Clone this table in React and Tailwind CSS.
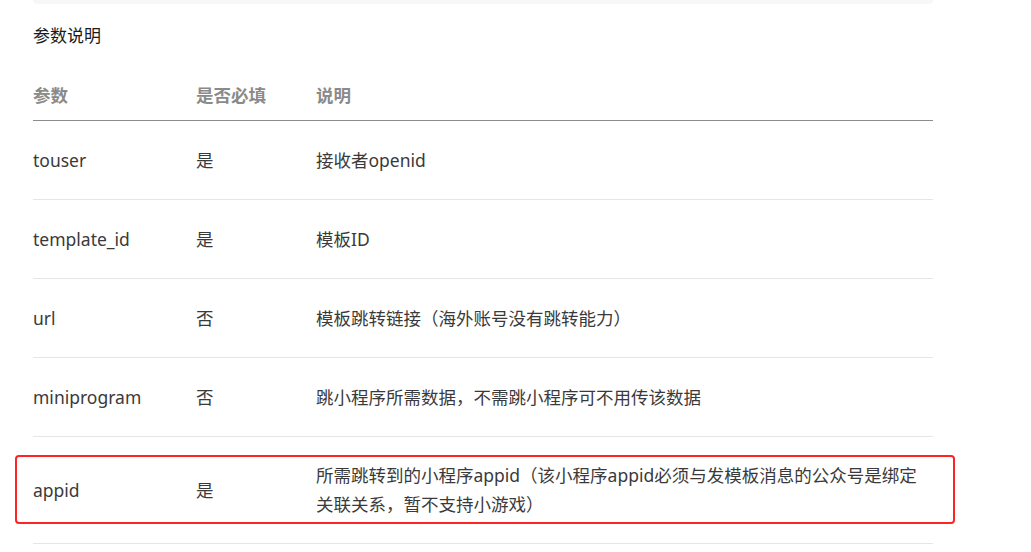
import React from "react";

const rows = [
  { p: "touser", r: "是", d: "接收者openid" },
  { p: "template_id", r: "是", d: "模板ID" },
  { p: "url", r: "否", d: "模板跳转链接（海外账号没有跳转能力）" },
  { p: "miniprogram", r: "否", d: "跳小程序所需数据，不需跳小程序可不用传该数据" },
];

export default function App() {
  return (
    <div className="relative w-[1031px] h-[552px] overflow-hidden bg-white font-['Noto_Sans','Noto_Sans_CJK_SC',sans-serif] text-[17.5px] text-[#3a3a3a]">
      <div className="ml-[33px] w-[900px]">
        <div className="h-[4px] rounded-b-[6px] bg-[#f7f7f7]" />
        <div className="mt-[18px] h-[28px] leading-[28px] text-[17px] text-[#1a1a1a]">参数说明</div>
        <div className="mt-[31px] grid grid-cols-[163px_120px_1fr] border-b border-[#8c8c8c] pb-[11px] font-bold leading-[28px] text-[#8a8a8a]">
          <div>参数</div>
          <div>是否必填</div>
          <div>说明</div>
        </div>
        {rows.map((row) => (
          <div
            key={row.p}
            className="grid h-[79px] grid-cols-[163px_120px_1fr] items-center border-b border-[#e6e6e6] leading-[28px]"
          >
            <div>{row.p}</div>
            <div>{row.r}</div>
            <div>{row.d}</div>
          </div>
        ))}
        <div className="grid h-[107px] grid-cols-[163px_120px_1fr] items-center border-b border-[#e6e6e6] leading-[29px]">
          <div>appid</div>
          <div>是</div>
          <div>
            所需跳转到的小程序appid（该小程序appid必须与发模板消息的公众号是绑定
            <br />
            关联关系，暂不支持小游戏）
          </div>
        </div>
      </div>
      <div className="pointer-events-none absolute left-[15px] top-[455px] h-[69px] w-[940px] rounded-[4px] border-2 border-[#ff2424]" />
    </div>
  );
}
